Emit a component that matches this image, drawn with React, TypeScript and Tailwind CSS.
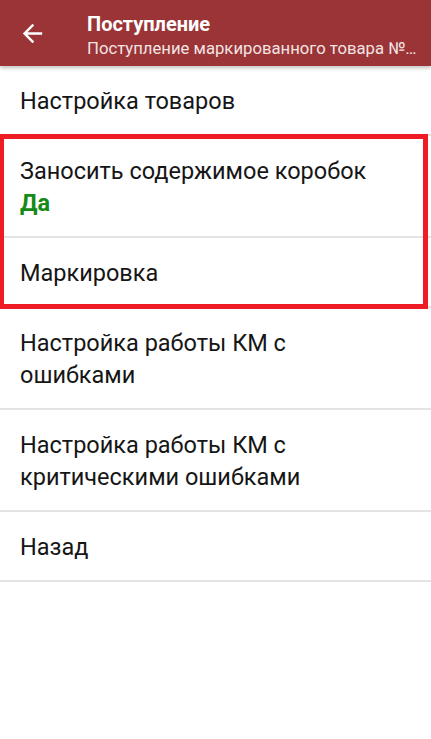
import { ReactNode } from 'react'

function Row({ children }: { children: ReactNode }) {
    return (
        <div className="px-[20px] pt-[19px] pb-[17px] text-[23.5px] leading-[32px] text-[#161616] border-b-2 border-[#e3e3e3]">
            {children}
        </div>
    )
}

export default function App() {
    return (
        <div className="w-[431px] h-[739px] bg-white overflow-hidden" style={{ fontFamily: 'Roboto, "Noto Sans", sans-serif' }}>
            <div className="relative z-10 h-[66px] bg-[#9a3436] flex shadow-[0_2px_4px_rgba(0,0,0,0.25)]">
                <div className="w-[87px] pl-[18px] pt-[19px]">
                    <svg width="29" height="29" viewBox="0 0 24 24">
                        <path d="M20 11H7.83l5.59-5.59L12 4l-8 8 8 8 1.41-1.41L7.83 13H20v-2z" fill="#fff" />
                    </svg>
                </div>
                <div className="flex-1 min-w-0 pr-[6px] pt-[11px]">
                    <div className="text-white text-[20px] font-bold leading-[26px]">Поступление</div>
                    <div className="text-[#f3e4e4] text-[16.7px] leading-[22px] mt-[1px] whitespace-nowrap">
                        Поступление маркированного товара №…
                    </div>
                </div>
            </div>
            <Row>Настройка товаров</Row>
            <div className="relative">
                <Row>
                    <div>Заносить содержимое коробок</div>
                    <div className="font-bold text-[#168a16]">Да</div>
                </Row>
                <Row>Маркировка</Row>
                <div className="absolute left-0 right-[3px] -top-[2px] -bottom-[1px] border-[5px] border-l-4 border-[#ee1c25] pointer-events-none" />
            </div>
            <Row>
                <div>Настройка работы КМ с</div>
                <div>ошибками</div>
            </Row>
            <Row>
                <div>Настройка работы КМ с</div>
                <div>критическими ошибками</div>
            </Row>
            <Row>Назад</Row>
        </div>
    )
}
